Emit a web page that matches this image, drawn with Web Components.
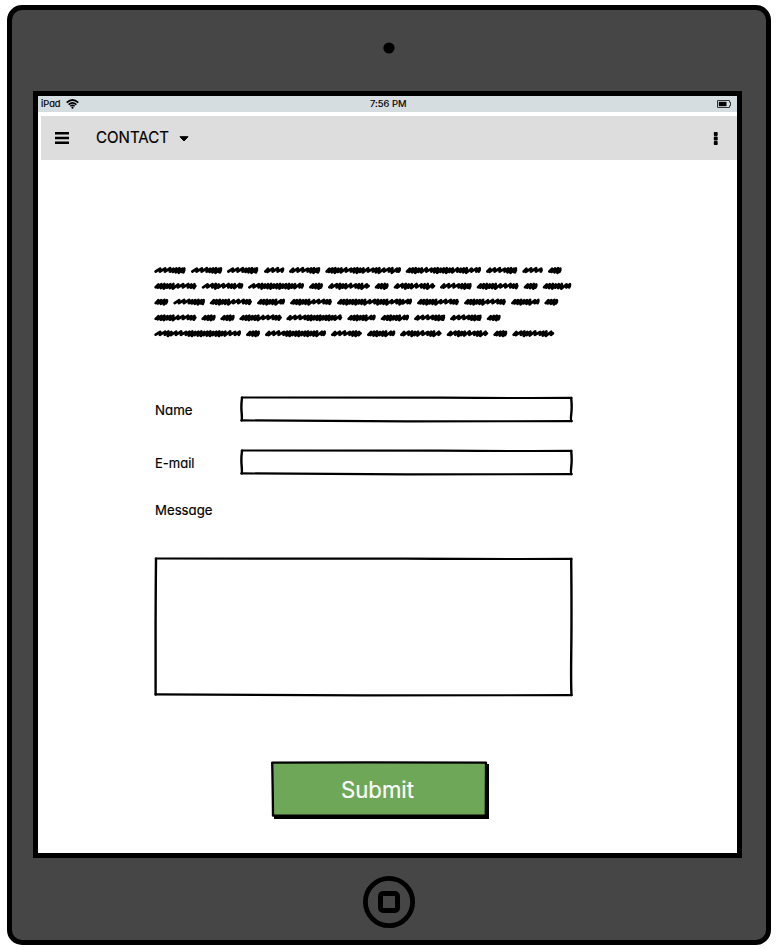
<!DOCTYPE html>
<html lang="en">
<head>
<meta charset="utf-8">
<title>Contact</title>
<style>
html,body{margin:0;background:#fff}
body{font-family:Inter,"Liberation Sans",sans-serif}
</style>
</head>
<body>
<tablet-frame>
  <status-bar></status-bar>
  <app-bar><hand-text class="title" text="CONTACT" width="73" size="16.5"></hand-text></app-bar>
  <contact-form>
    <scribble-text></scribble-text>
    <form-field class="name" label="Name" width="37.5"></form-field>
    <form-field class="mail" label="E-mail" width="39.5"></form-field>
    <hand-text class="message" text="Message" width="57.5" size="13.5"></hand-text>
    <sketch-box class="area" w="419" h="140"></sketch-box>
    <submit-button><hand-text text="Submit" width="73" size="22.4"></hand-text></submit-button>
  </contact-form>
</tablet-frame>
<script>
const make = (name, render) => customElements.define(name, class extends HTMLElement {
  constructor() { super(); this.attachShadow({mode: 'open'}); }
  connectedCallback() { this.shadowRoot.innerHTML = render(this); }
});

make('tablet-frame', () => `<style>
:host{display:flex;flex-direction:column;align-items:center;box-sizing:border-box;width:764px;height:940px;margin:5px 0 0 7px;background:#464646;border:5px solid #000;border-radius:15px}
.camera{display:block;flex:none;margin:32px 0 37px}
.screen{box-sizing:border-box;width:709px;height:767px;flex:none;border:5px solid #000;background:#fff;margin-left:-3px;display:flex;flex-direction:column}
.home{margin-top:18px;flex:none;display:block}
</style><svg class="camera" width="12" height="12"><circle cx="6" cy="6" r="5.6"/></svg><div class="screen"><slot></slot></div>
<svg class="home" width="52" height="52" fill="none" stroke="#000"><circle cx="26" cy="26" r="23.6" stroke-width="4.8"/><rect x="17.5" y="17.5" width="17" height="17" rx="2.5" stroke-width="5"/></svg>`);

make('hand-text', el => {
  const s = +el.getAttribute('size'), w = +el.getAttribute('width');
  return `<style>:host{display:block}svg{display:block;overflow:visible}text{font-family:Inter,"Liberation Sans",sans-serif;font-feature-settings:"cv11","calt" 0}</style>
<svg width="${w}" height="${s}"><text x="0" y="${s * .86}" fill="currentColor" stroke="currentColor" stroke-width=".2" stroke-linejoin="round" font-size="${s}" font-weight="400" textLength="${w}" lengthAdjust="spacingAndGlyphs">${el.getAttribute('text')}</text></svg>`;
});

make('status-bar', () => `<style>
:host{display:grid;grid-template-columns:1fr auto 1fr;align-items:center;height:16px;background:#d6dde1;flex:none;padding:0 6px 0 3px}
.left{display:flex;align-items:center;gap:5px}.right{justify-self:end}svg{display:block}.time{padding-left:5px}
</style><div class="left"><hand-text text="iPad" width="19.5" size="9.3"></hand-text>
<svg width="13" height="10" viewBox="0 0 13 10" fill="none" stroke="#000"><path d="M.7 3.7Q6.5-1.7 12.3 3.7" stroke-width="1.8"/><path d="M2.6 5.6Q6.5 2 10.4 5.6" stroke-width="1.6"/><path d="M4.3 7.3Q6.5 5.4 8.7 7.3" stroke-width="1.4"/><circle cx="6.5" cy="8.7" r="1.1" fill="#000" stroke="none"/></svg></div>
<hand-text class="time" text="7:56 PM" width="36.5" size="9.3"></hand-text>
<svg class="right" width="14" height="8" viewBox="0 0 14 8"><path d="M.5.5H12.5V2.2H13.5V5.8H12.5V7.5H.5Z" fill="none" stroke="#333"/><path d="M1.8 1.8H9.5V6.2H1.8Z"/></svg>`);

make('app-bar', () => `<style>
:host{display:flex;align-items:center;box-sizing:border-box;height:44px;margin:4px 0 0 3px;background:#ddd;flex:none;padding:0 19px 0 14px}
::slotted(.title){padding-bottom:2px}
svg{display:block}.menu{margin-right:27px}.caret{margin:2px 0 0 10px}.more{margin-left:auto}
</style><svg class="menu" width="14" height="12"><path d="M0 1.3H14M0 6H14M0 10.7H14" stroke="#000" stroke-width="2.5"/></svg>
<slot></slot><svg class="caret" width="10" height="6"><path d="M1 .7H9L5 5Z" stroke="#000" stroke-linejoin="round"/></svg>
<svg class="more" width="5" height="13"><rect x=".8" y="0" width="3.9" height="3.9" rx=".8"/><rect x=".8" y="4.6" width="3.9" height="3.9" rx=".8"/><rect x=".8" y="9.1" width="3.9" height="3.9" rx=".8"/></svg>`);

make('contact-form', () => `<style>
:host{display:flex;flex-direction:column;align-items:flex-start;padding:104px 0 0 116px}
::slotted(.name){margin-top:52px}::slotted(.mail){margin-top:26px}
::slotted(.message){margin:26.5px 0 0 .5px}::slotted(.area){margin-top:40.5px}
::slotted(submit-button){margin:64px 0 0 117px}
</style><slot></slot>`);

make('form-field', el => `<style>
:host{display:grid;grid-template-columns:86px 333px;align-items:center;height:27px}hand-text{padding:.2px 0 0 .5px}
</style><hand-text text="${el.getAttribute('label')}" width="${el.getAttribute('width')}" size="13.5"></hand-text><sketch-box w="333" h="27"></sketch-box>`);

// A rectangle with slightly bowed, hand-drawn edges.
make('sketch-box', el => {
  const w = +el.getAttribute('w'), h = +el.getAttribute('h'), r = w - 1.5, b = h - 2;
  const bow = h > 50 ? .4 : 1;
  return `<style>:host{display:block}svg{display:block}</style>
<svg width="${w}" height="${h}" fill="none" stroke="#000" stroke-linecap="round">
<path d="M1.8 1.5Q${w * .35} 1.2 ${w * .6} 1.7T${r} 1.9" stroke-width="2.2"/>
<path d="M${r - .3} 2Q${r + .6 * bow} ${h * .4} ${r - .2} ${h * .65}T${r} ${b}" stroke-width="2.4"/>
<path d="M1.6 ${b - .6}Q${w * .3} ${b} ${w * .5} ${b + .3}T${r} ${b + .2}" stroke-width="2.2"/>
<path d="M2 1.8Q${1.9 - .9 * bow} ${h * .35} 1.6 ${h * .6}T1.6 ${b - .5}" stroke-width="2.4"/></svg>`;
});

make('submit-button', () => `<style>
:host{display:grid;width:218px;height:58px;color:#fff}
svg,.label{grid-area:1/1}.label{display:flex;place-self:center;padding:2px 5px 0 0}svg{display:block}
</style><svg width="218" height="58"><path d="M216 3V56.2H3" fill="none" stroke="#000" stroke-width="4"/><path d="M1.2 1.6Q105 1 215 1.7L214.8 54.6L2 54.7Q1.7 24 1.2 1.6Z" fill="#6da757" stroke="#000" stroke-width="2.3" stroke-linejoin="round"/></svg><div class="label"><slot></slot></div>`);

// Each word is [start, end, rhythm]: t = open strokes, d = dense strokes.
make('scribble-text', () => {
  const lines = [
    [[154.3,185.7,'ttdd'],[191,222.3,'ttdd'],[227,258.3,'ttdd'],[264,284.3,'ttt'],[289,320.3,'ttdd'],[325.3,401,'ddtddtdtdt'],[405.7,481,'ddtdddtdtt'],[486,517.3,'ttdd'],[522.3,543,'ttt'],[548,561.7,'dd']],
    [[154.3,196.7,'ddttd'],[201.7,243.3,'tdtdt'],[248,304,'tdddddt'],[309,323,'dd'],[328,370,'tdtdt'],[374.7,388.7,'dd'],[393.7,435.3,'tdtdt'],[440,471.7,'ttdd'],[476.7,518.7,'ddttd'],[523.7,537.7,'dd'],[542.7,571.3,'ddt']],
    [[154.3,168.3,'dd'],[173.3,205,'ttdd'],[209.7,252,'ddttd'],[257,285,'ddt'],[290,332,'ddttd'],[337,412,'dddtddtdt'],[417,459,'ddttd'],[464,506,'ddttd'],[511,539.7,'ddt'],[544.3,558.3,'dd']],
    [[154.3,196.7,'ddttd'],[201.3,215.7,'dd'],[220.3,234.7,'dd'],[239.3,282,'ddttd'],[286.3,342.3,'ttddddt'],[347.3,375.7,'ddt'],[380.7,409,'ddt'],[414,445.3,'ttdd'],[450,481.7,'ttdd'],[486.7,500.7,'dd']],
    [[154.3,241,'tdttddddddtt'],[246,260,'dd'],[265,326,'ttdddddt'],[331,362,'ttdd'],[367,395.3,'ddt'],[400,441.7,'tdtdt'],[446.7,488.3,'tdtdt'],[493.3,507.3,'dd'],[512.3,554.3,'tdtdt']]
  ];
  const word = ([a, b, code], y) => {
    const L = b - a - 2.8, end = b - 1.4; let x = a + 1.4, p = `M${x} ${y + 1.2}`, i = 0;
    while (x < b - 2.6) {
      const c = code[Math.min(code.length - 1, Math.floor((x - a - 1.4) / L * code.length))];
      const step = c === 't' ? 5 : 3, k = i++ % 3 * .45;
      const up = Math.min(end, x + step * .9), down = Math.min(end, x + step);
      p += c === 't' ? `L${up} ${y - 1.7 - k * .4}Q${up + .3} ${y - .4} ${down - .8} ${y + 1.3}`
                     : `L${up} ${y - 1.6 - k * .5}L${down - .9} ${y + 1.6 + k}`;
      x = down;
    }
    return p + `L${end} ${y - .2}`;
  };
  return `<style>:host{display:block;height:80px}svg{display:block}</style><svg width="420" height="80" viewBox="154 264 420 80"><path fill="none" stroke="#000" stroke-width="2.7" stroke-linecap="round" stroke-linejoin="round" d="${lines.map((l, n) => l.map(w => word(w, 270.3 + n * 15.8)).join('')).join('')}"/></svg>`;
});
</script>
</body>
</html>
